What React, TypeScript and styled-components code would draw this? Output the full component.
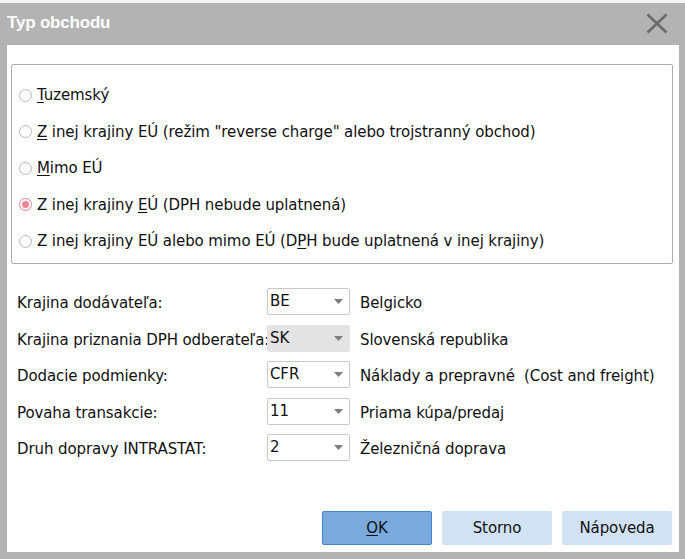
import React from "react";
import styled, { createGlobalStyle } from "styled-components";

const Global = createGlobalStyle`
  html, body { margin: 0; padding: 0; background: #ffffff; }
  body { font-family: "DejaVu Sans", Verdana, sans-serif; }
  * { box-sizing: border-box; }
`;

const Page = styled.div`
  width: 685px;
  height: 559px;
  padding-top: 3px;
  background: #f4f4f4;
`;

const Dialog = styled.div`
  width: 685px;
  height: 556px;
  background: #b3b3b3;
  display: flex;
  flex-direction: column;
`;

const TitleBar = styled.div`
  height: 42px;
  flex: none;
  display: flex;
  align-items: center;
  justify-content: space-between;
  padding: 0 16px 0 7px;
`;

const Title = styled.div`
  color: #ffffff;
  font-family: "Liberation Sans Narrow", "Liberation Sans", Arial, sans-serif;
  font-weight: bold;
  font-size: 17px;
  letter-spacing: -0.2px;
  margin-top: -2px;
`;

const CloseButton = styled.button`
  width: 24px;
  height: 24px;
  padding: 0;
  border: 0;
  background: none;
  display: flex;
  align-items: center;
  justify-content: center;
  margin-top: -2px;
  cursor: pointer;
`;

const Body = styled.div`
  flex: 1;
  margin: 0 6px 7px 7px;
  background: #ffffff;
  display: flex;
  flex-direction: column;
  padding: 19px 6px 7px 4px;
  font-size: 15px;
  letter-spacing: -0.1px;
  color: #111;
`;

const GroupBox = styled.div`
  height: 200px;
  border: 1px solid #adadad;
  border-radius: 2px;
  padding: 12px 0 0 7px;
  display: flex;
  flex-direction: column;
`;

const RadioRow = styled.label`
  height: 36.5px;
  display: flex;
  align-items: center;
  gap: 5px;
  white-space: nowrap;
`;

const RadioDot = styled.span<{ $checked?: boolean }>`
  width: 13px;
  height: 13px;
  flex: none;
  border-radius: 50%;
  border: 1px solid ${(p) => (p.$checked ? "#ee7d93" : "#b9b9b9")};
  background: #ffffff;
  display: flex;
  align-items: center;
  justify-content: center;
  &::after {
    content: "";
    width: 7px;
    height: 7px;
    border-radius: 50%;
    background: ${(p) => (p.$checked ? "#ef8598" : "transparent")};
  }
`;

const Key = styled.span`
  text-decoration: underline;
  text-underline-offset: 2px;
`;

const Form = styled.div`
  margin-top: 24px;
  padding-left: 6px;
  display: flex;
  flex-direction: column;
`;

const FieldRow = styled.div`
  height: 36.6px;
  display: grid;
  grid-template-columns: 250px 83px 1fr;
  align-items: start;
  white-space: nowrap;
`;

const FieldLabel = styled.span`
  padding-top: 6px;
`;

const Combo = styled.div<{ $disabled?: boolean }>`
  height: 27px;
  border: 1px solid ${(p) => (p.$disabled ? "#e3e3e3" : "#c9c9c9")};
  border-radius: 2px;
  background: ${(p) => (p.$disabled ? "#e3e3e3" : "#ffffff")};
  display: flex;
  align-items: center;
  justify-content: space-between;
  padding: 0 6px 0 2px;
`;

const ComboValue = styled.span`
  margin-top: -1px;
`;

const Description = styled.span`
  padding-top: 6px;
  padding-left: 10px;
`;

const Footer = styled.div`
  margin-top: auto;
  display: flex;
  justify-content: flex-end;
  gap: 10px;
  padding-right: 1px;
`;

const Button = styled.button<{ $primary?: boolean }>`
  width: 110px;
  height: 34px;
  border-radius: 2px;
  border: 1px solid ${(p) => (p.$primary ? "#3f83d3" : "#d1e2f4")};
  background: ${(p) => (p.$primary ? "#7aaade" : "#d1e2f4")};
  color: #111;
  font-family: "DejaVu Sans", Verdana, sans-serif;
  font-size: 15px;
  letter-spacing: -0.1px;
  padding: 0;
  cursor: pointer;
`;

const ComboArrow = () => (
  <svg width="9" height="5" viewBox="0 0 9 5">
    <path d="M0 0 H9 L4.5 5 Z" fill="#7d7d7d" />
  </svg>
);

const CloseIcon = () => (
  <svg width="22" height="21" viewBox="0 0 22 21">
    <path
      d="M1.5 1.5 L20.5 19.5 M20.5 1.5 L1.5 19.5"
      stroke="#6a6a6a"
      strokeWidth="2.6"
      strokeLinecap="butt"
    />
  </svg>
);

type Field = {
  label: string;
  value: string;
  text: string;
  disabled?: boolean;
};

const fields: Field[] = [
  { label: "Krajina dodávateľa:", value: "BE", text: "Belgicko" },
  {
    label: "Krajina priznania DPH odberateľa:",
    value: "SK",
    text: "Slovenská republika",
    disabled: true,
  },
  {
    label: "Dodacie podmienky:",
    value: "CFR",
    text: "Náklady a prepravné\u00a0 (Cost and freight)",
  },
  { label: "Povaha transakcie:", value: "11", text: "Priama kúpa/predaj" },
  { label: "Druh dopravy INTRASTAT:", value: "2", text: "Železničná doprava" },
];

export default function App() {
  return (
    <Page>
      <Global />
      <Dialog>
        <TitleBar>
          <Title>Typ obchodu</Title>
          <CloseButton aria-label="Zavrieť">
            <CloseIcon />
          </CloseButton>
        </TitleBar>
        <Body>
          <GroupBox>
            <RadioRow>
              <RadioDot />
              <span>
                <Key>T</Key>uzemský
              </span>
            </RadioRow>
            <RadioRow>
              <RadioDot />
              <span>
                <Key>Z</Key> inej krajiny EÚ (režim "reverse charge" alebo
                trojstranný obchod)
              </span>
            </RadioRow>
            <RadioRow>
              <RadioDot />
              <span>
                <Key>M</Key>imo EÚ
              </span>
            </RadioRow>
            <RadioRow>
              <RadioDot $checked />
              <span>
                Z inej krajiny <Key>E</Key>Ú (DPH nebude uplatnená)
              </span>
            </RadioRow>
            <RadioRow>
              <RadioDot />
              <span>
                Z inej krajiny EÚ alebo mimo EÚ (D<Key>P</Key>H bude uplatnená
                v inej krajiny)
              </span>
            </RadioRow>
          </GroupBox>

          <Form>
            {fields.map((f) => (
              <FieldRow key={f.label}>
                <FieldLabel>{f.label}</FieldLabel>
                <Combo $disabled={f.disabled}>
                  <ComboValue>{f.value}</ComboValue>
                  <ComboArrow />
                </Combo>
                <Description>{f.text}</Description>
              </FieldRow>
            ))}
          </Form>

          <Footer>
            <Button $primary>
              <Key>O</Key>K
            </Button>
            <Button>Storno</Button>
            <Button>Nápoveda</Button>
          </Footer>
        </Body>
      </Dialog>
    </Page>
  );
}
